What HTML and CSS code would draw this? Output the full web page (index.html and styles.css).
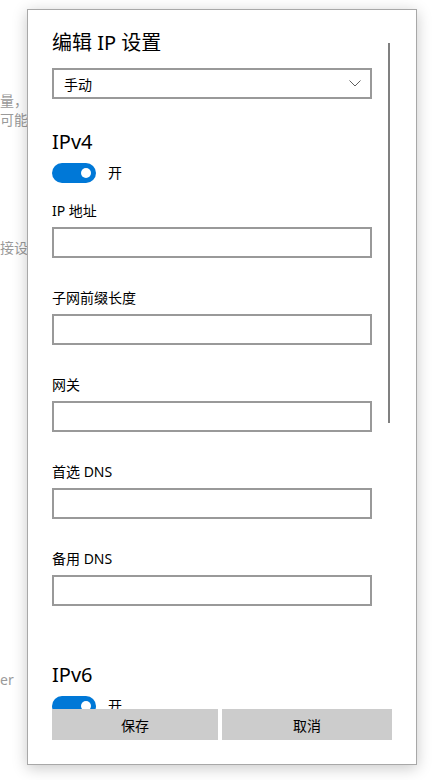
FILE: index.html
```html
<!DOCTYPE html>
<html lang="zh-CN">
<head>
<meta charset="utf-8">
<title>编辑 IP 设置</title>
<link rel="stylesheet" href="styles.css">
</head>
<body>
<div class="backdrop">
  <p class="bg-line l1">量，可</p>
  <p class="bg-line l2">可能性</p>
  <p class="bg-line l3">接设置</p>
  <p class="bg-line l4">er</p>
</div>

<div class="dialog">
  <div class="scroll-area">
    <div class="content">
      <h1 class="title">编辑 IP 设置</h1>
      <div class="select">
        <span>手动</span>
        <svg class="chevron" width="12" height="7" viewBox="0 0 12 7"><path d="M0.5 0.5 L6 6 L11.5 0.5" fill="none" stroke="#606060" stroke-width="1"/></svg>
      </div>

      <h2 class="section">IPv4</h2>
      <div class="toggle-row">
        <span class="toggle"><span class="knob"></span></span>
        <span class="toggle-label">开</span>
      </div>

      <div class="field">
        <label class="label">IP 地址</label>
        <input class="input" type="text">
      </div>
      <div class="field">
        <label class="label">子网前缀长度</label>
        <input class="input" type="text">
      </div>
      <div class="field">
        <label class="label">网关</label>
        <input class="input" type="text">
      </div>
      <div class="field">
        <label class="label">首选 DNS</label>
        <input class="input" type="text">
      </div>
      <div class="field">
        <label class="label">备用 DNS</label>
        <input class="input" type="text">
      </div>

      <h2 class="section ipv6">IPv6</h2>
      <div class="toggle-row">
        <span class="toggle"><span class="knob"></span></span>
        <span class="toggle-label">开</span>
      </div>
    </div>
    <div class="scroll-thumb"></div>
  </div>
  <div class="footer">
    <button class="btn save">保存</button>
    <button class="btn cancel">取消</button>
  </div>
</div>
</body>
</html>
```

FILE: styles.css
```css
html, body {
  margin: 0;
  padding: 0;
}
body {
  width: 439px;
  height: 780px;
  overflow: hidden;
  background: #ffffff;
  position: relative;
  font-family: "Noto Sans", "Noto Sans CJK SC", sans-serif;
  color: #000;
}

.backdrop {
  display: flex;
  flex-direction: column;
  padding-top: 91px;
}
.bg-line {
  margin: 0;
  font-size: 14px;
  line-height: 19px;
  color: #9a9a9a;
  white-space: nowrap;
}
.l3 { margin-top: 109px; }
.l4 { margin-top: 413px; }

.dialog {
  position: absolute;
  left: 27px;
  top: 9px;
  width: 390px;
  height: 756px;
  box-sizing: border-box;
  background: #fff;
  border: 1px solid #a8a8a8;
  box-shadow: 0 3px 14px rgba(0, 0, 0, 0.22);
  display: flex;
  flex-direction: column;
}

.scroll-area {
  position: relative;
  flex: 1;
  overflow: hidden;
}
.content {
  padding: 19px 0 0 24px;
  display: flex;
  flex-direction: column;
  width: 320px;
}
.scroll-thumb {
  position: absolute;
  left: 360px;
  top: 33px;
  width: 2px;
  height: 380px;
  background: #808080;
}

.title {
  margin: 0;
  font-size: 20px;
  font-weight: normal;
  line-height: 28px;
}

.select {
  margin-top: 11px;
  height: 31px;
  box-sizing: border-box;
  border: 2px solid #999;
  display: flex;
  align-items: center;
  justify-content: space-between;
  padding: 0 9px 0 10px;
  font-size: 14px;
}
.chevron { display: block; }

.section {
  margin: 29px 0 0;
  font-size: 20px;
  font-weight: normal;
  line-height: 28px;
}
.section.ipv6 { margin-top: 55px; }

.toggle-row {
  margin-top: 7px;
  display: flex;
  align-items: center;
  gap: 12px;
  height: 20px;
}
.toggle {
  width: 44px;
  height: 20px;
  border-radius: 10px;
  background: #0078d7;
  display: flex;
  align-items: center;
  justify-content: flex-end;
  padding-right: 5px;
  box-sizing: border-box;
}
.knob {
  width: 10px;
  height: 10px;
  border-radius: 50%;
  background: #fff;
}
.toggle-label {
  font-size: 14px;
  line-height: 20px;
}

.field {
  display: flex;
  flex-direction: column;
  margin-top: 30px;
}
.toggle-row + .field { margin-top: 18px; }
.label {
  font-size: 14px;
  line-height: 20px;
}
.input {
  margin: 6px 0 0;
  height: 31px;
  width: 320px;
  box-sizing: border-box;
  border: 2px solid #999;
  background: #fff;
  outline: none;
  padding: 0 10px;
  font: inherit;
  font-size: 14px;
}

.footer {
  display: grid;
  grid-template-columns: 166px 170px;
  column-gap: 4px;
  padding: 0 0 24px 24px;
}
.btn {
  height: 31px;
  border: none;
  margin: 0;
  padding: 0;
  background: #cccccc;
  font-family: "Noto Sans", "Noto Sans CJK SC", sans-serif;
  font-size: 14px;
  color: #000;
}
```
